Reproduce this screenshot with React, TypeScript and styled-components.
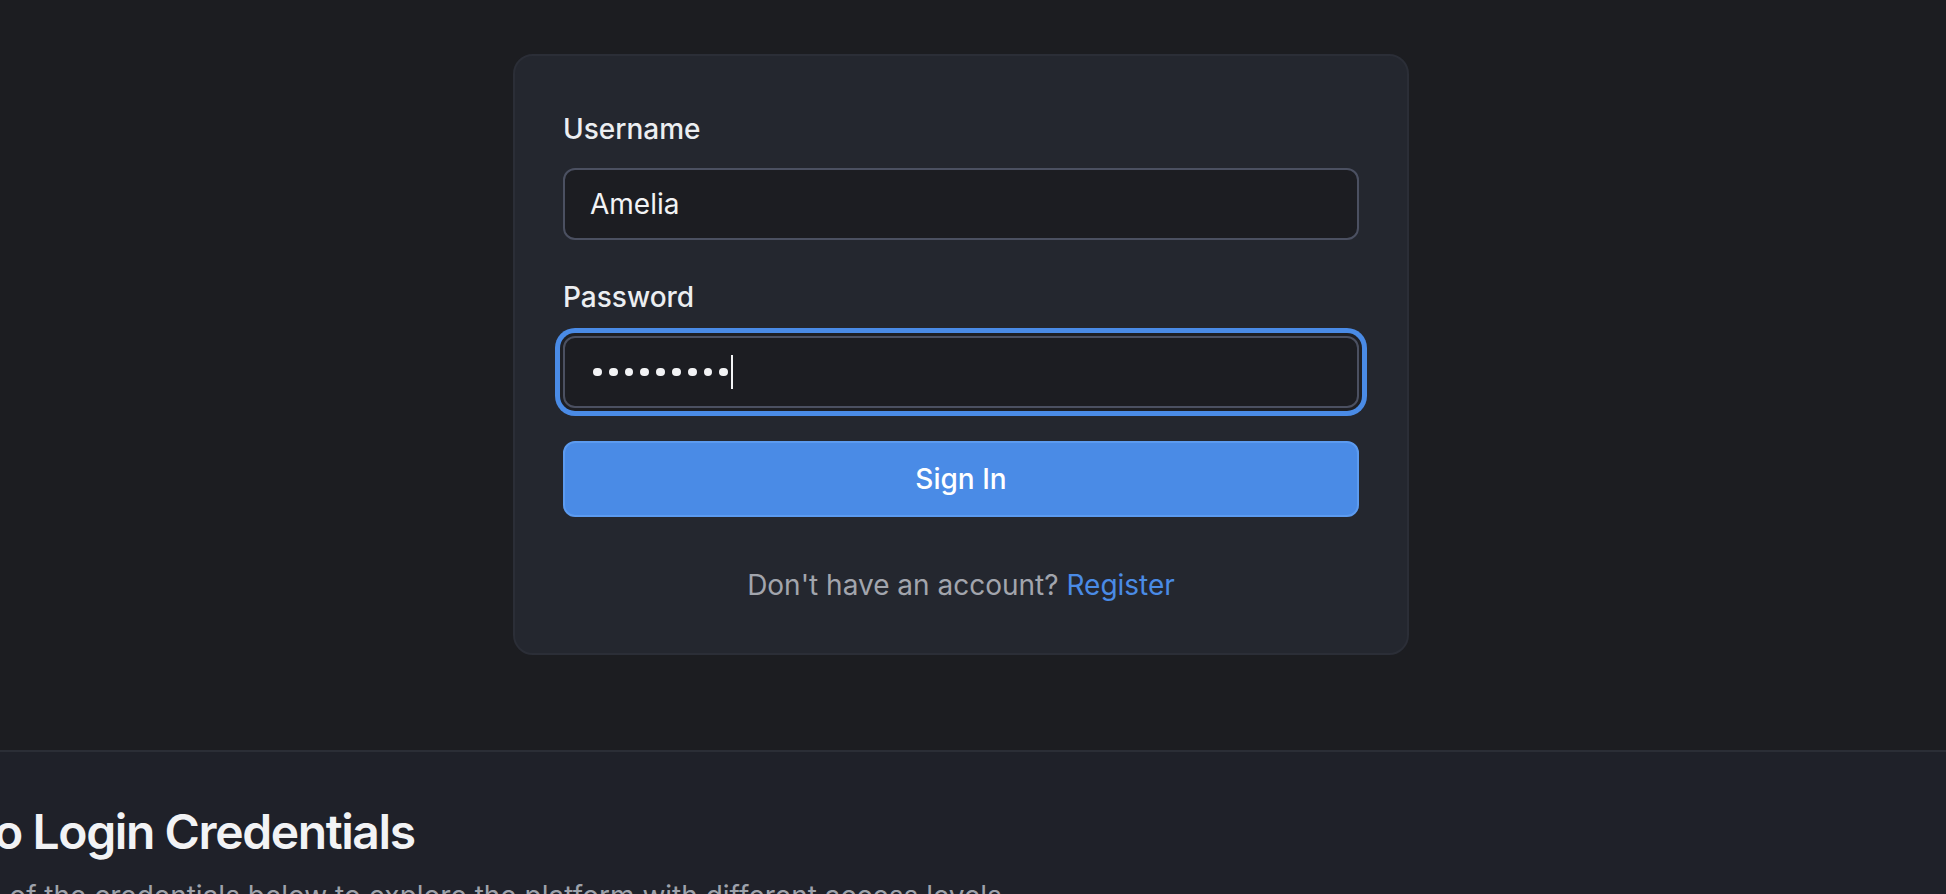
import React from 'react';
import styled, {createGlobalStyle} from "styled-components";

const GlobalStyle = createGlobalStyle`
    html, body {
        margin: 0;
        padding: 0;
        background: #1c1d21;
        font-family: Inter, "Noto Sans", "Liberation Sans", sans-serif;
        overflow: hidden;
    }
    * {
        box-sizing: border-box;
    }
`

const Page = styled.div`
    width: 1946px;
    height: 894px;
    overflow: hidden;
    display: flex;
    flex-direction: column;
`

const LoginArea = styled.section`
    display: flex;
    justify-content: center;
    padding: 54px 24px 95px 0;
    background: #1c1d21;
`

const Card = styled.div`
    width: 896px;
    background: #24272f;
    border: 2px solid #2b2e37;
    border-radius: 20px;
    padding: 52px 48px 47px;
`

const Field = styled.div`
    display: flex;
    flex-direction: column;
    margin-bottom: 36px;
`

const Label = styled.label`
    font-size: 28px;
    line-height: 42px;
    font-weight: 500;
    color: #eceef1;
    margin-bottom: 18px;
`

type BoxProps = {
    focused?: boolean
}

const InputBox = styled.div<BoxProps>`
    height: 72px;
    display: flex;
    align-items: center;
    padding: 0 25px;
    background: #1c1d22;
    border: 2px solid #4b5061;
    border-radius: 12px;
    box-shadow: ${p => p.focused ? '0 0 0 3px #1e1f24, 0 0 0 8px #4a8be6' : 'none'};
`

const Value = styled.span`
    font-size: 28px;
    color: #f2f3f5;
`

const Dots = styled.div`
    display: flex;
    align-items: center;
    gap: 7px;
    margin-left: 3px;
`

const Dot = styled.span`
    width: 8.8px;
    height: 8.8px;
    border-radius: 50%;
    background: #f2f3f5;
`

const Caret = styled.span`
    width: 2px;
    height: 34px;
    background: #f2f3f5;
    margin-left: 3px;
`

const SignIn = styled.button`
    width: 100%;
    height: 76px;
    margin-top: -3px;
    background: #4a8be6;
    border: 2px solid #5c9bf0;
    border-radius: 12px;
    color: #ffffff;
    font-family: inherit;
    font-size: 28px;
    font-weight: 500;
    cursor: pointer;
`

const Footer = styled.p`
    margin: 47px 0 0;
    text-align: center;
    font-size: 28px;
    line-height: 42px;
    color: #a2a5ad;
`

const Link = styled.a`
    color: #4a8be6;
    text-decoration: none;
`

const CredentialsArea = styled.section`
    flex: 1;
    background: #1f2129;
    border-top: 2px solid #2b2e36;
    padding-top: 51px;
`

const CredentialsInner = styled.div`
    margin-left: -108px;
`

const Heading = styled.h2`
    margin: 0;
    font-size: 48px;
    line-height: 58px;
    font-weight: 600;
    letter-spacing: -1.4px;
    color: #f2f3f5;
    white-space: nowrap;
`

const Subtitle = styled.p`
    margin: 14px 0 0;
    font-size: 28px;
    line-height: 42px;
    color: #9ea2ab;
    white-space: nowrap;
`

export default function App() {
    const dots = Array.from({length: 9});
    return (
        <>
            <GlobalStyle/>
            <Page>
                <LoginArea>
                    <Card>
                        <Field>
                            <Label>Username</Label>
                            <InputBox>
                                <Value>Amelia</Value>
                            </InputBox>
                        </Field>
                        <Field>
                            <Label>Password</Label>
                            <InputBox focused>
                                <Dots>
                                    {dots.map((_, i) => <Dot key={i}/>)}
                                </Dots>
                                <Caret/>
                            </InputBox>
                        </Field>
                        <SignIn>Sign In</SignIn>
                        <Footer>
                            Don't have an account? <Link href="#">Register</Link>
                        </Footer>
                    </Card>
                </LoginArea>
                <CredentialsArea>
                    <CredentialsInner>
                        <Heading>Demo Login Credentials</Heading>
                        <Subtitle>Use one of the credentials below to explore the platform with different access levels.</Subtitle>
                    </CredentialsInner>
                </CredentialsArea>
            </Page>
        </>
    );
}
